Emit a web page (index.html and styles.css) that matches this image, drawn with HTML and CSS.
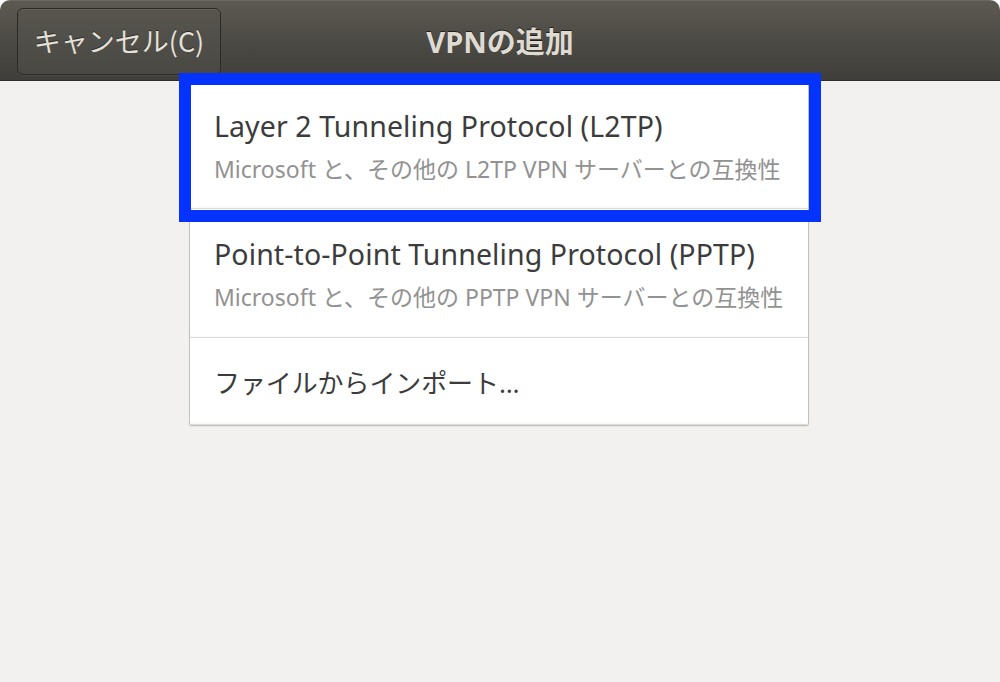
FILE: index.html
```html
<!DOCTYPE html>
<html lang="ja">
<head>
<meta charset="utf-8">
<title>VPNの追加</title>
<link rel="stylesheet" href="styles.css">
</head>
<body>
<div class="window">
  <header class="headerbar">
    <div class="hb-start">
      <button class="btn">キャンセル(C)</button>
    </div>
    <div class="hb-title">VPNの追加</div>
    <div class="hb-end"></div>
  </header>
  <main class="content">
    <div class="list">
      <div class="row row-two">
        <div class="row-title">Layer 2 Tunneling Protocol (L2TP)</div>
        <div class="row-sub">Microsoft と、その他の L2TP VPN サーバーとの互換性</div>
      </div>
      <div class="row row-two">
        <div class="row-title">Point-to-Point Tunneling Protocol (PPTP)</div>
        <div class="row-sub">Microsoft と、その他の PPTP VPN サーバーとの互換性</div>
      </div>
      <div class="row row-one">
        <div class="row-title row-title-jp">ファイルからインポート…</div>
      </div>
      <div class="highlight"></div>
    </div>
  </main>
</div>
</body>
</html>
```

FILE: styles.css
```css
* { box-sizing: border-box; }
html, body {
  margin: 0;
  padding: 0;
  background: #ffffff;
}
body {
  font-family: "Noto Sans", "Noto Sans CJK JP", sans-serif;
}
.window {
  width: 1000px;
  height: 682px;
  background: #f2f1f0;
  border-radius: 10px 10px 0 0;
  overflow: hidden;
}
.headerbar {
  height: 81px;
  display: grid;
  grid-template-columns: 1fr auto 1fr;
  align-items: center;
  padding: 0 17px;
  background: linear-gradient(to bottom, #5c5a52 0%, #4c4a44 50%, #403e3a 100%);
  border-top: 1px solid #6a6860;
  box-shadow: inset 0 -1px 0 #2f2e2b;
}
.hb-start { display: flex; }
.btn {
  height: 67px;
  width: 204px;
  border: 1px solid #2b2a27;
  border-radius: 6px;
  background: linear-gradient(to bottom, #57554e, #4a4843);
  box-shadow: inset 0 1px 0 rgba(255,255,255,0.08), 0 1px 0 rgba(255,255,255,0.06);
  color: #e4e1da;
  font-family: "Noto Sans CJK JP", "Noto Sans", sans-serif;
  font-size: 27px;
  letter-spacing: 0;
  padding: 0 0 2px 0;
  text-shadow: 0 -1px 0 rgba(0,0,0,0.5);
}
.hb-title {
  color: #dfdbd2;
  font-family: "Noto Sans", "Noto Sans CJK JP", sans-serif;
  font-weight: 700;
  font-size: 29px;
  text-shadow: 0 -1px 0 rgba(0,0,0,0.6);
  padding-bottom: 2px;
}
.content {
  display: flex;
  flex-direction: column;
  align-items: center;
  padding-right: 2px;
}
.list {
  position: relative;
  width: 620px;
  background: #ffffff;
  border: 1px solid #c3c0bb;
  border-top: none;
  border-radius: 0 0 3px 3px;
  box-shadow: 0 1px 0 rgba(0,0,0,0.05);
}
.row {
  display: flex;
  flex-direction: column;
  justify-content: center;
  padding-left: 24px;
  border-bottom: 1px solid #dedcd8;
  box-shadow: inset 0 -3px 2px -2px rgba(0,0,0,0.03);
}
.row:last-of-type { border-bottom: none; }
.row-two { height: 128px; padding-top: 4px; gap: 12px; }
.row:nth-child(2) { height: 129px; }
.row-one { height: 87px; padding-top: 4px; }
.row-title {
  color: #3c3c3c;
  font-size: 28.5px;
  line-height: 32px;
  letter-spacing: 0.1px;
}
.row-title-jp {
  font-size: 26px;
  letter-spacing: -0.1px;
}
.row-sub {
  color: #929292;
  font-size: 23px;
  line-height: 30px;
  letter-spacing: 0;
}
.highlight {
  position: absolute;
  left: -11px;
  top: -8px;
  width: 642px;
  height: 149px;
  border: 12px solid #0433ff;
  pointer-events: none;
}
```
